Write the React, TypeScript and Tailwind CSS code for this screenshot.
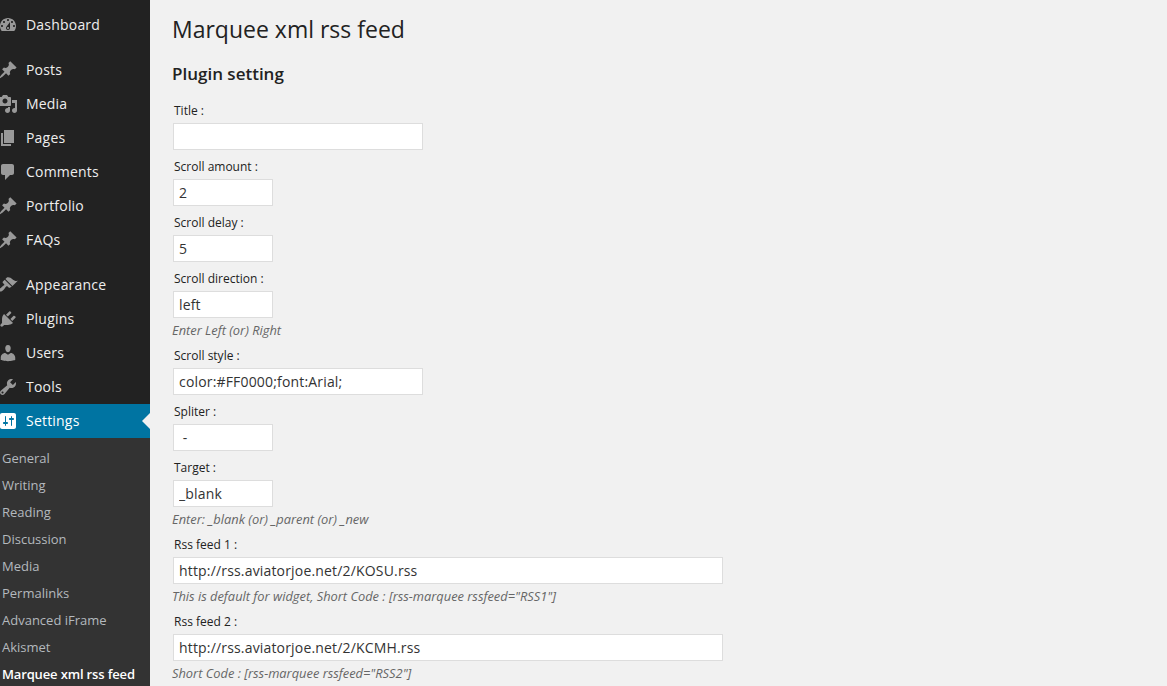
import React from 'react';

const PIN =
  'M10.44 3.02l1.82-1.82 6.36 6.35-1.83 1.82c-1.05-.68-2.48-.57-3.41.36l-.75.75c-.92.93-1.04 2.35-.35 3.41l-1.83 1.82-2.41-2.41-2.8 2.79c-.42.42-3.38 2.71-3.8 2.29s1.86-3.39 2.28-3.81l2.79-2.79L4.1 9.36l1.83-1.82c1.05.69 2.48.57 3.4-.36l.75-.75c.93-.92 1.05-2.35.36-3.41z';

const ICONS: Record<string, string> = {
  dashboard:
    'M3.76 16h12.48c1.1-1.37 1.76-3.11 1.76-5 0-4.42-3.58-8-8-8s-8 3.58-8 8c0 1.89.66 3.63 1.76 5zM10 4c.55 0 1 .45 1 1s-.45 1-1 1-1-.45-1-1 .45-1 1-1zM6 6c.55 0 1 .45 1 1s-.45 1-1 1-1-.45-1-1 .45-1 1-1zm8 0c.55 0 1 .45 1 1s-.45 1-1 1-1-.45-1-1 .45-1 1-1zm-5.37 5.55L12 7v6c0 1.1-.9 2-2 2s-2-.9-2-2c0-.57.24-1.08.63-1.45zM4 10c.55 0 1 .45 1 1s-.45 1-1 1-1-.45-1-1 .45-1 1-1zm12 0c.55 0 1 .45 1 1s-.45 1-1 1-1-.45-1-1 .45-1 1-1zm-5 3c0-.55-.45-1-1-1s-1 .45-1 1 .45 1 1 1 1-.45 1-1z',
  pin: PIN,
  media:
    'M13 11V4c0-.55-.45-1-1-1h-1.67L9 1H5L3.67 3H2c-.55 0-1 .45-1 1v7c0 .55.45 1 1 1h10c.55 0 1-.45 1-1zM7 4.5c1.38 0 2.5 1.12 2.5 2.5S8.38 9.5 7 9.5 4.5 8.38 4.5 7 5.62 4.5 7 4.5zM14 6h5v10.5c0 1.38-1.12 2.5-2.5 2.5S14 17.88 14 16.5s1.12-2.5 2.5-2.5c.17 0 .34.02.5.05V9h-3V6zm-4 8.05V13h2v3.5c0 1.38-1.12 2.5-2.5 2.5S7 17.88 7 16.5 8.12 14 9.5 14c.17 0 .34.02.5.05z',
  pages: 'M6 15V2h10v13H6zm-1 1h8v2H3V5h2v11z',
  comments: 'M5 2h9c1.1 0 2 .9 2 2v7c0 1.1-.9 2-2 2h-2l-5 5v-5H5c-1.1 0-2-.9-2-2V4c0-1.1.9-2 2-2z',
  appearance:
    'M14.48 11.06L7.41 3.99l1.5-1.5c.5-.56 2.3-.47 3.51.32 1.21.8 1.43 1.28 2.91 2.1 1.18.64 2.45 1.26 4.45.85zm-.71.71L6.7 4.7 4.93 6.47c-.39.39-.39 1.02 0 1.41l1.06 1.06c.39.39.39 1.03 0 1.42-.6.6-1.43 1.11-2.21 1.69-.35.26-.7.53-1.01.84C1.43 13.23.4 14.8 1.2 15.6l.71.7c.8.8 2.37-.23 3.74-1.59.31-.31.58-.66.84-1.01.58-.78 1.09-1.61 1.69-2.21.39-.39 1.03-.39 1.42 0l1.06 1.06c.39.39 1.02.39 1.41 0z',
  plugins:
    'M13.11 4.36L9.87 7.6 8 5.73l3.24-3.24c.35-.34 1.05-.2 1.56.32.52.51.66 1.21.31 1.55zm-8 1.77l.91-1.12 9.01 9.01-1.19.84c-.71.71-2.63 1.16-3.82 1.16H6.14L4.9 17.26c-.59.59-1.54.59-2.12 0-.59-.58-.59-1.53 0-2.12l1.24-1.24v-3.88c0-1.13.4-3.19 1.09-3.89zm7.26 3.97l3.24-3.24c.34-.35 1.04-.21 1.55.31.52.51.66 1.21.31 1.55l-3.24 3.25z',
  users:
    'M10 9.25c-2.27 0-2.73-3.44-2.73-3.44C7 4.02 7.82 2 9.97 2c2.16 0 2.98 2.02 2.71 3.81 0 0-.41 3.44-2.68 3.44zm0 2.57L12.72 10c2.39 0 4.52 2.33 4.52 4.53v2.49s-3.65 1.13-7.24 1.13c-3.65 0-7.24-1.13-7.24-1.13v-2.49c0-2.25 1.94-4.48 4.47-4.48z',
  tools:
    'M16.68 9.77c-1.34 1.34-3.3 1.67-4.95.99l-5.41 6.52c-.99.99-2.59.99-3.58 0s-.99-2.59 0-3.57l6.52-5.42c-.68-1.65-.35-3.61.99-4.95 1.28-1.28 3.12-1.62 4.72-1.06l-2.89 2.89 2.82 2.82 2.86-2.87c.53 1.58.18 3.39-1.08 4.65zM3.81 16.21c.4.39 1.04.39 1.43 0 .4-.4.4-1.04 0-1.43-.39-.4-1.03-.4-1.43 0-.39.39-.39 1.03 0 1.43z',
  settings:
    'M18 16V4c0-1.1-.9-2-2-2H4c-1.1 0-2 .9-2 2v12c0 1.1.9 2 2 2h12c1.1 0 2-.9 2-2zM8 11h1c.55 0 1 .45 1 1s-.45 1-1 1H8v1.5c0 .28-.22.5-.5.5s-.5-.22-.5-.5V13H6c-.55 0-1-.45-1-1s.45-1 1-1h1V5.5c0-.28.22-.5.5-.5s.5.22.5.5V11zm5-2h-1c-.55 0-1-.45-1-1s.45-1 1-1h1V5.5c0-.28.22-.5.5-.5s.5.22.5.5V7h1c.55 0 1 .45 1 1s-.45 1-1 1h-1v5.5c0 .28-.22.5-.5.5s-.5-.22-.5-.5V9z',
};

const MenuItem = ({ icon, label, active }: { icon: string; label: string; active?: boolean }) => (
  <div className={`flex items-center h-[34px] text-[14px] tracking-[0.2px] ${active ? 'bg-[#0074a2] text-white' : 'text-[#eeeeee]'}`}>
    <svg viewBox="0 0 20 20" className={`w-5 h-5 -ml-[2px] shrink-0 ${active ? 'text-white' : 'text-[#999999]'}`} fill="currentColor">
      <path d={ICONS[icon]} />
    </svg>
    <span className="ml-2 mb-[2px]">{label}</span>
    {active && (
      <span className="ml-auto w-0 h-0 border-y-[8px] border-y-transparent border-r-[8px] border-r-[#f1f1f1]" />
    )}
  </div>
);

const SubItem = ({ label, current }: { label: string; current?: boolean }) => (
  <div className={`h-[27px] flex items-center pl-[2px] text-[13px] whitespace-nowrap ${current ? 'text-white font-semibold tracking-[-0.15px]' : 'text-[#b4b9be]'}`}>
    {label}
  </div>
);

const Field = ({
  label,
  value = '',
  width = 'w-[100px]',
  hint,
}: {
  label: string;
  value?: string;
  width?: string;
  hint?: string;
}) => (
  <div className="flex flex-col">
    <div className="h-[17px] flex items-center pl-[2px] text-[12px] text-[#222222]">{label}</div>
    <input
      readOnly
      value={value}
      className={`${width} h-[27px] mt-[4px] ml-[1px] px-[5px] bg-white border border-[#dddddd] text-[14px] tracking-[0.17px] text-[#333333] outline-none`}
    />
    {hint && <div className="h-[17px] mt-[4px] flex items-center text-[12.85px] italic text-[#666666] whitespace-nowrap">{hint}</div>}
  </div>
);

export default function App() {
  return (
    <div className="flex h-[686px] overflow-hidden bg-[#f1f1f1] font-['Open_Sans',sans-serif]">
      <aside className="w-[150px] shrink-0 bg-[#222222] pt-[8px]">
        <MenuItem icon="dashboard" label="Dashboard" />
        <div className="h-[11px]" />
        <MenuItem icon="pin" label="Posts" />
        <MenuItem icon="media" label="Media" />
        <MenuItem icon="pages" label="Pages" />
        <MenuItem icon="comments" label="Comments" />
        <MenuItem icon="pin" label="Portfolio" />
        <MenuItem icon="pin" label="FAQs" />
        <div className="h-[11px]" />
        <MenuItem icon="appearance" label="Appearance" />
        <MenuItem icon="plugins" label="Plugins" />
        <MenuItem icon="users" label="Users" />
        <MenuItem icon="tools" label="Tools" />
        <MenuItem icon="settings" label="Settings" active />
        <div className="bg-[#333333] pt-[7px] pb-[7px]">
          <SubItem label="General" />
          <SubItem label="Writing" />
          <SubItem label="Reading" />
          <SubItem label="Discussion" />
          <SubItem label="Media" />
          <SubItem label="Permalinks" />
          <SubItem label="Advanced iFrame" />
          <SubItem label="Akismet" />
          <SubItem label="Marquee xml rss feed" current />
        </div>
      </aside>
      <main className="flex-1 pl-[22px] pt-[14px]">
        <h1 className="text-[23px] leading-[31px] font-normal text-[#222222]">Marquee xml rss feed</h1>
        <h3 className="mt-[18px] text-[17px] leading-[22px] font-semibold text-[#222222]">Plugin setting</h3>
        <div className="mt-[17px] flex flex-col gap-[8px]">
          <Field label="Title :" width="w-[250px]" />
          <Field label="Scroll amount :" value="2" />
          <Field label="Scroll delay :" value="5" />
          <Field label="Scroll direction :" value="left" hint="Enter Left (or) Right" />
          <Field label="Scroll style :" value="color:#FF0000;font:Arial;" width="w-[250px]" />
          <Field label="Spliter :" value=" - " />
          <Field label="Target :" value="_blank" hint="Enter: _blank (or) _parent (or) _new" />
          <Field label="Rss feed 1 :" value="http://rss.aviatorjoe.net/2/KOSU.rss" width="w-[550px]" hint={'This is default for widget, Short Code : [rss-marquee rssfeed="RSS1"]'} />
          <Field label="Rss feed 2 :" value="http://rss.aviatorjoe.net/2/KCMH.rss" width="w-[550px]" hint={'Short Code : [rss-marquee rssfeed="RSS2"]'} />
        </div>
      </main>
    </div>
  );
}
